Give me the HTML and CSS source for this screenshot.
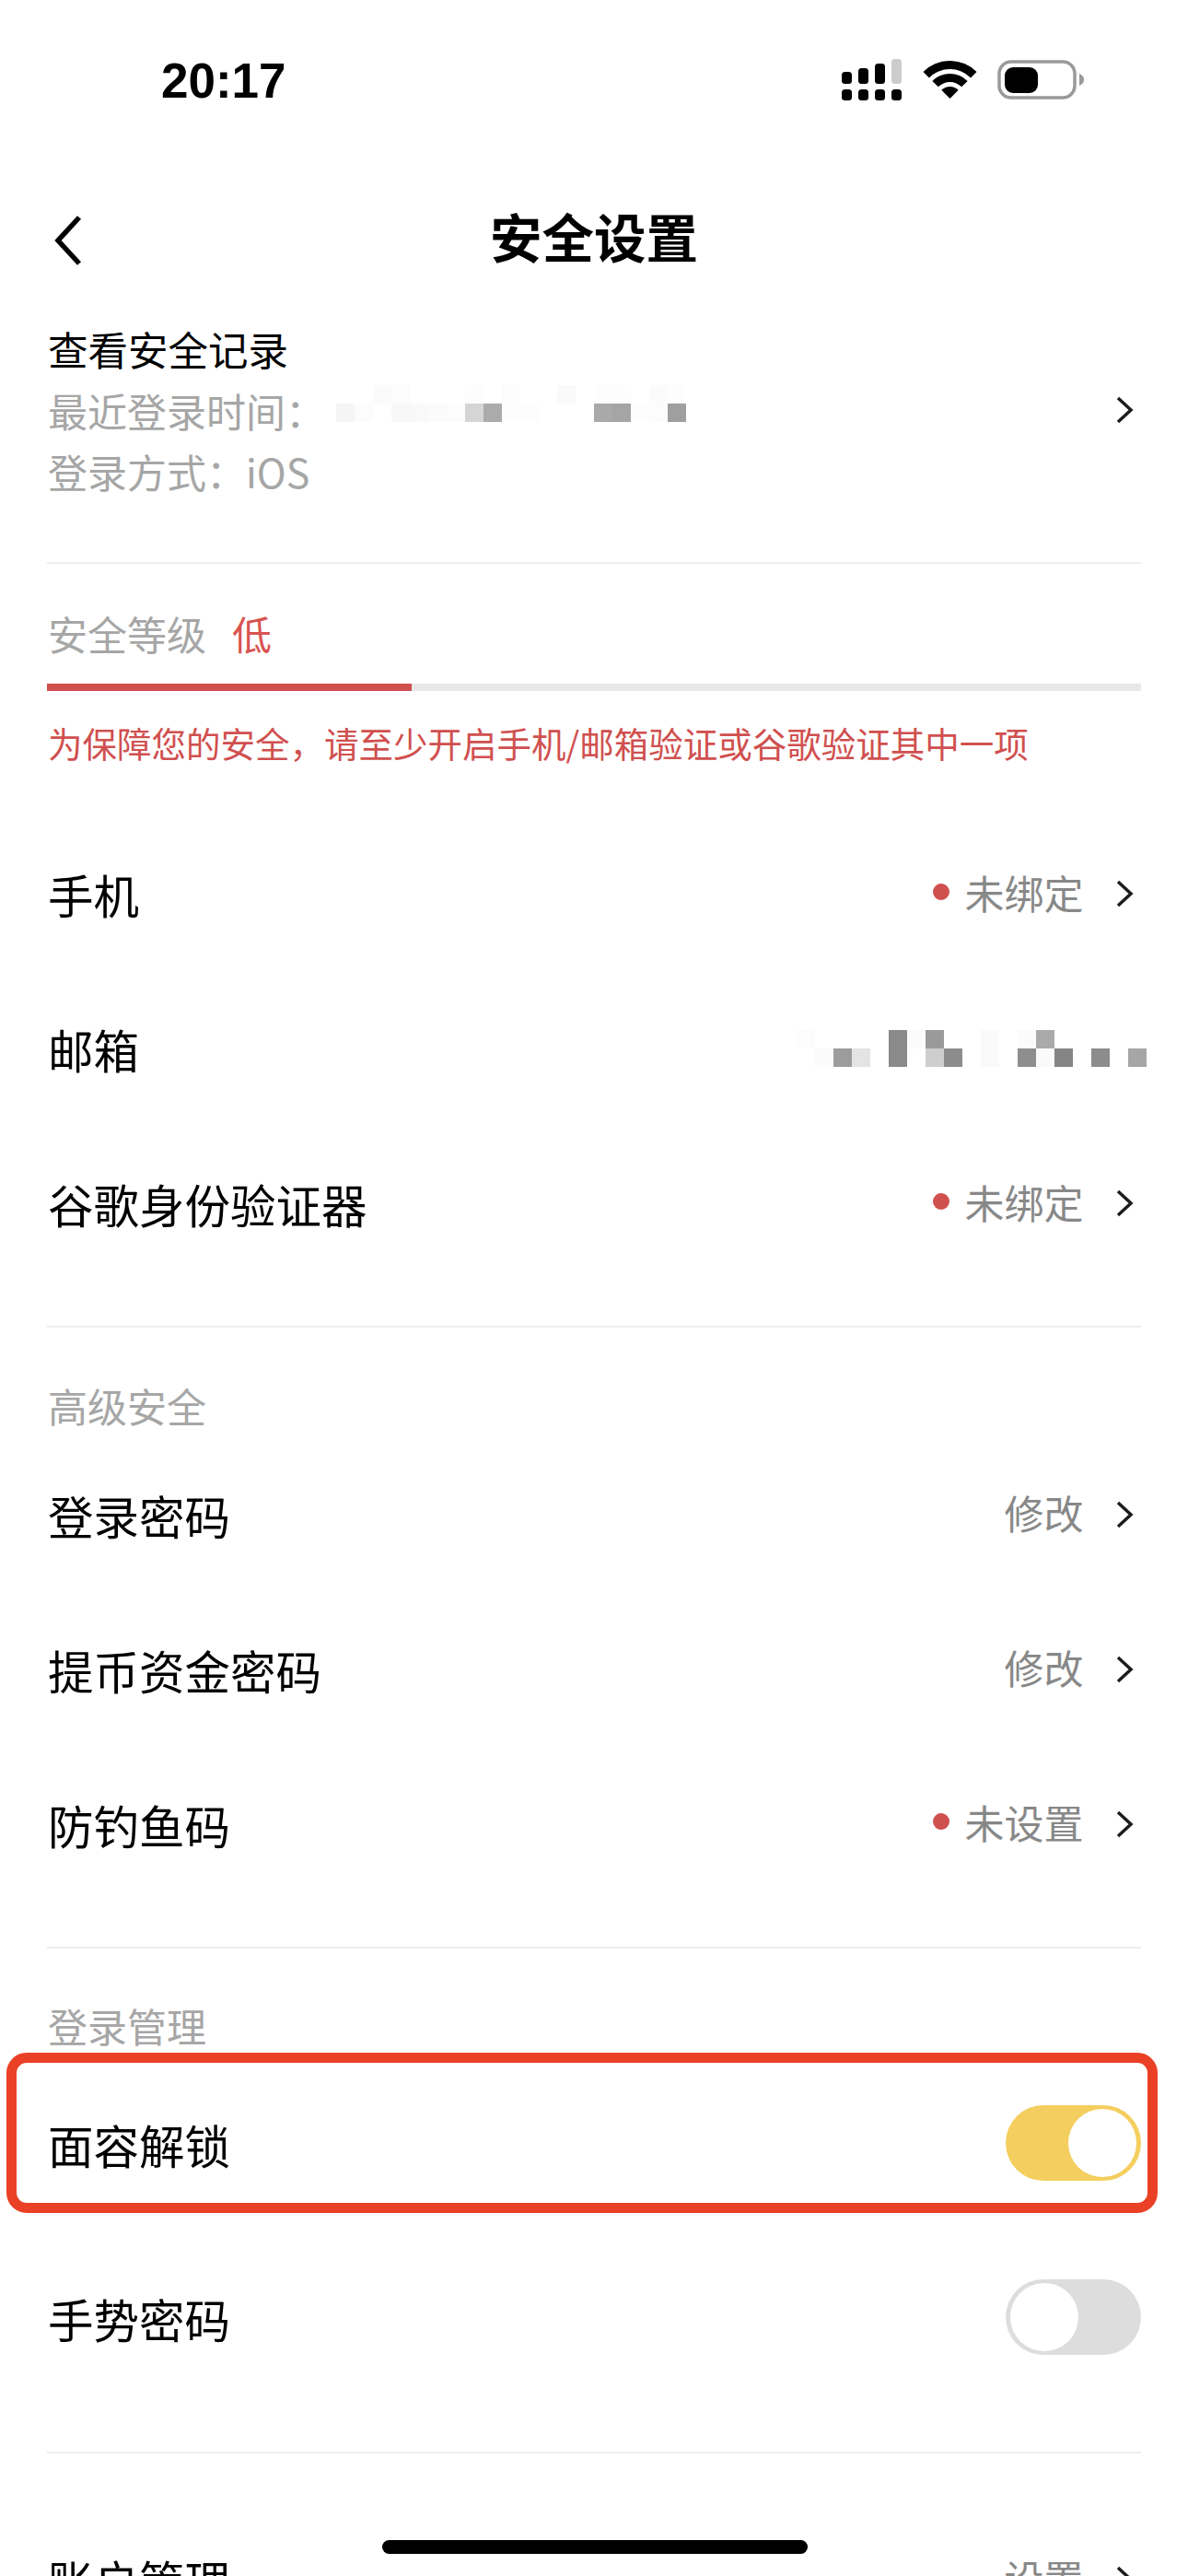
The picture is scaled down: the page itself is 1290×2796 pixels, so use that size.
FILE: index.html
```html
<!DOCTYPE html>
<html lang="zh-CN">
<head>
<meta charset="utf-8">
<title>安全设置</title>
<link rel="stylesheet" href="styles.css">
</head>
<body>
<div class="phone">
  <div class="status">
    <span class="time">20:17</span>
    <div class="status-icons">
      <svg class="signal" width="65" height="45" viewBox="0 0 65 45">
        <rect x="0" y="14" width="11" height="13" rx="3.5"/><rect x="18" y="10" width="11" height="17" rx="3.5"/><rect x="36" y="5" width="11" height="22" rx="3.5"/><rect x="54" y="0" width="11" height="27" rx="3.5" fill="#ccc"/>
        <rect x="0" y="33" width="11" height="12" rx="3.5"/><rect x="18" y="33" width="11" height="12" rx="3.5"/><rect x="36" y="33" width="11" height="12" rx="3.5"/><rect x="54" y="33" width="11" height="12" rx="3.5"/>
      </svg>
      <svg class="wifi" width="59" height="42" viewBox="-1 0 59 42">
        <path d="M-.5 12A41 41 0 0 1 57.5 12L51.1 18.4A32 32 0 0 0 5.9 18.4Z"/>
        <path d="M9.4 21.9A27 27 0 0 1 47.6 21.9L41.2 28.3A18 18 0 0 0 15.8 28.3Z"/>
        <path d="M19.3 31.8A13 13 0 0 1 37.7 31.8L28.5 41Z"/>
      </svg>
      <svg class="battery" width="95" height="43" viewBox="0 0 95 43">
        <rect x="2" y="2" width="82" height="39" rx="13" fill="none" stroke="#999" stroke-width="3.5"/>
        <rect x="8" y="8" width="36" height="28" rx="9"/>
        <path d="M89 15C93 17 94 19 94 21.500C94 24 93 26 89 28Z" fill="#999"/>
      </svg>
    </div>
  </div>

  <div class="nav">
    <svg class="back" width="32" height="56" viewBox="0 0 32 56"><path d="M28 3L5 28L28 53" fill="none" stroke="#000" stroke-width="5.500"/></svg>
    <h1 class="title">安全设置</h1>
  </div>

  <main class="content">
    <section class="record">
      <div class="record-text">
        <div class="record-title">查看安全记录</div>
        <div class="record-sub">最近登录时间：</div>
        <div class="record-sub">登录方式：iOS</div>
      </div>
      <svg class="chev chev-record" width="20" height="32" viewBox="0 0 20 32"><path d="M3 3L17 16L3 29"/></svg>
      <svg class="mosaic mosaic-a" width="380" height="60" viewBox="0 0 380 60" shape-rendering="crispEdges">
        <rect x="40" y="0" width="20" height="20" fill="#fbfbfb"/><rect x="60" y="0" width="20" height="20" fill="#fcfcfc"/><rect x="140" y="0" width="20" height="20" fill="#fdfdfd"/><rect x="180" y="0" width="20" height="20" fill="#fcfcfc"/><rect x="240" y="0" width="20" height="20" fill="#fafafa"/><rect x="280" y="0" width="40" height="20" fill="#fdfdfd"/><rect x="340" y="0" width="20" height="20" fill="#fbfbfb"/><rect x="360" y="0" width="20" height="20" fill="#fdfdfd"/>
        <rect x="0" y="20" width="20" height="20" fill="#f5f5f5"/><rect x="20" y="20" width="20" height="20" fill="#fcfcfc"/><rect x="60" y="20" width="20" height="20" fill="#f8f8f8"/><rect x="80" y="20" width="20" height="20" fill="#f9f9f9"/><rect x="100" y="20" width="20" height="20" fill="#fbfbfb"/><rect x="120" y="20" width="20" height="20" fill="#fcfcfc"/><rect x="140" y="20" width="20" height="20" fill="#d5d5d5"/><rect x="160" y="20" width="20" height="20" fill="#ababab"/><rect x="180" y="20" width="40" height="20" fill="#fdfdfd"/><rect x="280" y="20" width="20" height="20" fill="#a9a9a9"/><rect x="300" y="20" width="20" height="20" fill="#a5a5a5"/><rect x="320" y="20" width="20" height="20" fill="#fdfdfd"/><rect x="340" y="20" width="20" height="20" fill="#fcfcfc"/><rect x="360" y="20" width="20" height="20" fill="#9f9f9f"/>
      </svg>
    </section>
    <hr class="rule">

    <div class="level"><span class="level-label">安全等级</span><span class="level-value">低</span></div>
    <div class="bar"><div class="bar-fill"></div></div>
    <p class="warning">为保障您的安全，请至少开启手机/邮箱验证或谷歌验证其中一项</p>

    <div class="group group-first">
      <div class="row"><span class="label">手机</span><span class="value"><i class="dot"></i><span class="value-text">未绑定</span><svg class="chev" width="20" height="32" viewBox="0 0 20 32"><path d="M3 3L17 16L3 29"/></svg></span></div>
      <div class="row"><span class="label">邮箱</span>
        <svg class="mosaic-b" width="380" height="40" viewBox="0 0 380 40" shape-rendering="crispEdges">
          <rect x="0" y="0" width="20" height="20" fill="#fcfcfc"/><rect x="100" y="0" width="20" height="40" fill="#8a8a8a"/><rect x="120" y="0" width="20" height="20" fill="#fbfbfb"/><rect x="140" y="0" width="20" height="20" fill="#9a9a9a"/><rect x="200" y="0" width="20" height="40" fill="#fafafa"/><rect x="240" y="0" width="20" height="20" fill="#fbfbfb"/><rect x="260" y="0" width="20" height="20" fill="#aaaaaa"/>
          <rect x="20" y="20" width="20" height="20" fill="#fbfbfb"/><rect x="40" y="20" width="20" height="20" fill="#9c9c9c"/><rect x="60" y="20" width="20" height="20" fill="#e4e4e4"/><rect x="140" y="20" width="20" height="20" fill="#cecece"/><rect x="160" y="20" width="20" height="20" fill="#8c8c8c"/><rect x="240" y="20" width="20" height="20" fill="#8e8e8e"/><rect x="260" y="20" width="20" height="20" fill="#fafafa"/><rect x="280" y="20" width="20" height="20" fill="#848484"/><rect x="320" y="20" width="20" height="20" fill="#8c8c8c"/><rect x="360" y="20" width="20" height="20" fill="#a6a6a6"/>
        </svg>
      </div>
      <div class="row"><span class="label">谷歌身份验证器</span><span class="value"><i class="dot"></i><span class="value-text">未绑定</span><svg class="chev" width="20" height="32" viewBox="0 0 20 32"><path d="M3 3L17 16L3 29"/></svg></span></div>
    </div>
    <hr class="rule">

    <div class="subhead">高级安全</div>
    <div class="group">
      <div class="row"><span class="label">登录密码</span><span class="value"><span class="value-text">修改</span><svg class="chev" width="20" height="32" viewBox="0 0 20 32"><path d="M3 3L17 16L3 29"/></svg></span></div>
      <div class="row"><span class="label">提币资金密码</span><span class="value"><span class="value-text">修改</span><svg class="chev" width="20" height="32" viewBox="0 0 20 32"><path d="M3 3L17 16L3 29"/></svg></span></div>
      <div class="row"><span class="label">防钓鱼码</span><span class="value"><i class="dot"></i><span class="value-text">未设置</span><svg class="chev" width="20" height="32" viewBox="0 0 20 32"><path d="M3 3L17 16L3 29"/></svg></span></div>
    </div>
    <hr class="rule">

    <div class="subhead">登录管理</div>
    <div class="group group-toggles">
      <div class="row row-toggle"><span class="label">面容解锁</span><span class="toggle toggle-on"><i class="knob"></i></span></div>
      <div class="row row-toggle"><span class="label">手势密码</span><span class="toggle toggle-off"><i class="knob"></i></span></div>
    </div>
    <hr class="rule rule-account">

    <div class="row"><span class="label">账户管理</span><span class="value"><span class="value-text">设置</span><svg class="chev" width="20" height="32" viewBox="0 0 20 32"><path d="M3 3L17 16L3 29"/></svg></span></div>
  </main>

  <div class="highlight"></div>
  <div class="home-bar"></div>
</div>
</body>
</html>
```

FILE: styles.css
```css
* { box-sizing: border-box; }
html, body { margin: 0; padding: 0; background: #fff; }
body { font-family: "Noto Sans CJK SC", "Liberation Sans", sans-serif; color: #000; }
.phone { position: relative; width: 1290px; height: 2796px; overflow: hidden; background: #fff; }

.status { height: 198px; padding: 61px 112px 0 175px; display: flex; justify-content: space-between; align-items: flex-start; }
.time { font: 700 53px/54px "Liberation Sans", sans-serif; }
.status-icons { display: flex; align-items: flex-start; margin-top: 3px; }
.signal { margin-right: 23px; }
.wifi { margin-right: 22px; margin-top: 2px; }
.battery { margin-top: 1px; }

.nav { position: relative; height: 120px; padding-left: 58px; display: flex; align-items: center; }
.back { margin-top: 5px; }
.title { position: absolute; left: 0; right: 0; top: 27px; margin: 0; text-align: center; font-size: 56.500px; line-height: 60px; font-weight: 700; }

.content { padding: 0 51px; }
.record { position: relative; display: flex; justify-content: space-between; align-items: center; height: 292px; padding: 27px 0 66px 1px; }
.record-title { font-size: 43.500px; line-height: 66px; }
.record-sub { font-size: 43px; line-height: 66px; color: #a6a6a6; }
.mosaic-a { position: absolute; left: 314px; top: 100px; }
.rule { margin: 0; border: 0; height: 2px; background: #eeeeee; }
.chev { display: block; }
.chev path { fill: none; stroke: #1c1c1c; stroke-width: 3.500; }
.chev-record { margin-right: 8px; }

.level { margin-top: 42px; padding-left: 1px; font-size: 43px; line-height: 67px; display: flex; gap: 28px; }
.level-label { color: #a6a6a6; }
.level-value { color: #d9534f; }
.bar { margin-top: 21px; height: 8px; background: #e8e8e8; }
.bar-fill { width: 396px; height: 8px; background: #d0504f; }
.warning { margin: 31px 0 0; padding-left: 1px; font-size: 37.500px; line-height: 50px; color: #d0504f; white-space: nowrap; }

.group-first { margin-top: 56px; }
.group { margin-bottom: 48px; }
.row { display: flex; justify-content: space-between; align-items: center; height: 168px; padding-left: 1px; }
.label { font-size: 49.500px; line-height: 60px; }
.value { display: flex; align-items: center; margin-top: -7px; }
.value-text { font-size: 43px; line-height: 56px; color: #888888; }
.dot { width: 18px; height: 18px; border-radius: 50%; background: #d0504f; margin-right: 17px; }
.value .chev { margin-left: 34.500px; margin-right: 8px; margin-top: 5px; }
.mosaic-b { margin-right: -6px; margin-top: -2px; }

.subhead { margin-top: 58.600px; padding-left: 1px; font-size: 43px; line-height: 50px; color: #a6a6a6; }
.subhead + .group { margin-top: 11px; }
.subhead + .group-toggles { margin-top: 10.700px; margin-bottom: 48.700px; }
.row-toggle { height: 189px; }
.toggle { position: relative; width: 147px; height: 82px; border-radius: 41px; display: block; margin-top: -5.600px; }
.toggle-on { background: #f4ce5e; }
.toggle-off { background: #dddddd; }
.knob { position: absolute; top: 4px; width: 74px; height: 74px; border-radius: 50%; background: #fff; }
.toggle-on .knob { right: 5px; }
.toggle-off .knob { left: 5px; }
.rule-account + .row { margin-top: 54px; }

.highlight { position: absolute; left: 7px; top: 2228px; width: 1250px; height: 174px; border: 11px solid #ea4126; border-radius: 22px; }
.home-bar { position: absolute; left: 415px; top: 2757px; width: 462px; height: 15px; border-radius: 8px; background: #000; }
```
